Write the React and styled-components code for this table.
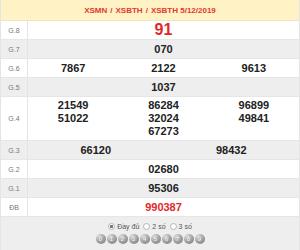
import React from 'react';
import styled, { createGlobalStyle } from 'styled-components';

const Global = createGlobalStyle`
  html, body { margin: 0; padding: 0; background: #fff; }
  body { font-family: "Liberation Sans", Arial, sans-serif; }
`;

const Table = styled.div`
  width: 300px;
  box-sizing: border-box;
  border-left: 1px solid #e4e4e4;
  border-right: 1px solid #e4e4e4;
  border-bottom: 1px solid #e4e4e4;
`;

const Header = styled.div`
  height: 20px;
  background: #fff2c4;
  border-bottom: 1px solid #ede5c6;
  display: flex;
  align-items: center;
  justify-content: center;
  color: #e2382f;
  font-weight: bold;
  font-size: 8px;
`;

const Crumb = styled.span`
  margin: 0 3px;
`;

const Row = styled.div`
  display: grid;
  grid-template-columns: 27px 1fr;
  background: ${(p) => (p.$alt ? '#eeeeee' : '#ffffff')};
  border-bottom: 1px solid #e6e6e6;
`;

const Label = styled.div`
  border-right: 1px solid #e4e4e4;
  display: flex;
  align-items: center;
  justify-content: center;
  font-size: 7px;
  color: #777;
`;

const Values = styled.div`
  display: grid;
  grid-template-columns: repeat(${(p) => p.$cols}, 1fr);
  align-items: center;
  min-height: 18px;
  padding: ${(p) => (p.$multi ? '2px 0' : '0')};
`;

const Num = styled.div`
  text-align: center;
  font-weight: bold;
  font-size: ${(p) => (p.$big ? '16px' : '11px')};
  line-height: ${(p) => (p.$big ? '18px' : p.$multi ? '13px' : '18px')};
  color: ${(p) => (p.$red ? '#e3262a' : '#222')};
  grid-column: ${(p) => p.$col || 'auto'};
`;

const Footer = styled.div`
  background: #eeeeee;
  padding: 3px 0 8px;
  display: flex;
  flex-direction: column;
  align-items: center;
`;

const Options = styled.div`
  display: flex;
  align-items: center;
  height: 13px;
  gap: 4px;
  font-size: 7px;
  color: #555;
`;

const Option = styled.label`
  display: flex;
  align-items: center;
  gap: 2px;
`;

const Radio = styled.span`
  width: 5px;
  height: 5px;
  border-radius: 50%;
  border: 1px solid #b5b5b5;
  background: ${(p) => (p.$on ? 'radial-gradient(circle, #777 0 1.4px, #fff 1.6px)' : '#fff')};
`;

const Balls = styled.div`
  display: flex;
  gap: 1px;
  height: 11px;
  align-items: center;
`;

const Ball = styled.span`
  width: 10px;
  height: 10px;
  border-radius: 50%;
  background: radial-gradient(circle at 35% 30%, #e8e8e8 0, #a8a8a8 45%, #6f6f6f 100%);
  display: flex;
  align-items: center;
  justify-content: center;
  font-size: 6px;
  font-weight: bold;
  color: #fff;
  text-shadow: 0 0 1px #444;
`;

const rows = [
  { label: 'G.8', cols: 1, nums: ['91'], big: true, red: true },
  { label: 'G.7', cols: 1, nums: ['070'] },
  { label: 'G.6', cols: 3, nums: ['7867', '2122', '9613'] },
  { label: 'G.5', cols: 1, nums: ['1037'] },
  {
    label: 'G.4',
    cols: 3,
    multi: true,
    nums: ['21549', '86284', '96899', '51022', '32024', '49841', ['67273', 2]],
  },
  { label: 'G.3', cols: 2, nums: ['66120', '98432'] },
  { label: 'G.2', cols: 1, nums: ['02680'] },
  { label: 'G.1', cols: 1, nums: ['95306'] },
  { label: 'ĐB', cols: 1, nums: ['990387'], red: true },
];

export default function App() {
  return (
    <>
      <Global />
      <Table>
        <Header>
          <span>XSMN</span>
          <Crumb>/</Crumb>
          <span>XSBTH</span>
          <Crumb>/</Crumb>
          <span>XSBTH 5/12/2019</span>
        </Header>
        {rows.map((r, i) => (
          <Row key={r.label} $alt={i % 2 === 1}>
            <Label>{r.label}</Label>
            <Values $cols={r.cols} $multi={r.multi}>
              {r.nums.map((n) => {
                const [v, col] = Array.isArray(n) ? n : [n, null];
                return (
                  <Num key={v} $big={r.big} $red={r.red} $multi={r.multi} $col={col}>
                    {v}
                  </Num>
                );
              })}
            </Values>
          </Row>
        ))}
        <Footer>
          <Options>
            <Option><Radio $on />Đầy đủ</Option>
            <Option><Radio />2 số</Option>
            <Option><Radio />3 số</Option>
          </Options>
          <Balls>
            {Array.from({ length: 10 }, (_, i) => (
              <Ball key={i}>{i}</Ball>
            ))}
          </Balls>
        </Footer>
      </Table>
    </>
  );
}
